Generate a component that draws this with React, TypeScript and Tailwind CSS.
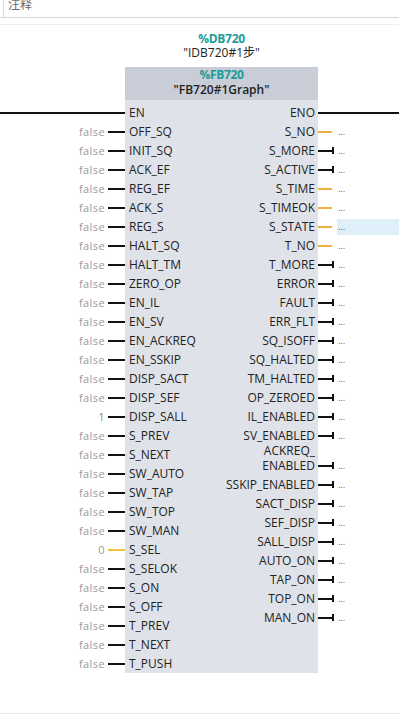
import React from "react";

type L = { v: string; n: string; kind?: "en" | "yellow" };
const left: L[] = [
  { v: "", n: "EN", kind: "en" },
  { v: "false", n: "OFF_SQ" },
  { v: "false", n: "INIT_SQ" },
  { v: "false", n: "ACK_EF" },
  { v: "false", n: "REG_EF" },
  { v: "false", n: "ACK_S" },
  { v: "false", n: "REG_S" },
  { v: "false", n: "HALT_SQ" },
  { v: "false", n: "HALT_TM" },
  { v: "false", n: "ZERO_OP" },
  { v: "false", n: "EN_IL" },
  { v: "false", n: "EN_SV" },
  { v: "false", n: "EN_ACKREQ" },
  { v: "false", n: "EN_SSKIP" },
  { v: "false", n: "DISP_SACT" },
  { v: "false", n: "DISP_SEF" },
  { v: "1", n: "DISP_SALL" },
  { v: "false", n: "S_PREV" },
  { v: "false", n: "S_NEXT" },
  { v: "false", n: "SW_AUTO" },
  { v: "false", n: "SW_TAP" },
  { v: "false", n: "SW_TOP" },
  { v: "false", n: "SW_MAN" },
  { v: "0", n: "S_SEL", kind: "yellow" },
  { v: "false", n: "S_SELOK" },
  { v: "false", n: "S_ON" },
  { v: "false", n: "S_OFF" },
  { v: "false", n: "T_PREV" },
  { v: "false", n: "T_NEXT" },
  { v: "false", n: "T_PUSH" },
];

type R = { n: string; k: "eno" | "o" | "b"; hl?: boolean; two?: boolean };
const right: R[] = [
  { n: "ENO", k: "eno" },
  { n: "S_NO", k: "o" },
  { n: "S_MORE", k: "b" },
  { n: "S_ACTIVE", k: "b" },
  { n: "S_TIME", k: "o" },
  { n: "S_TIMEOK", k: "o" },
  { n: "S_STATE", k: "o", hl: true },
  { n: "T_NO", k: "o" },
  { n: "T_MORE", k: "b" },
  { n: "ERROR", k: "b" },
  { n: "FAULT", k: "b" },
  { n: "ERR_FLT", k: "b" },
  { n: "SQ_ISOFF", k: "b" },
  { n: "SQ_HALTED", k: "b" },
  { n: "TM_HALTED", k: "b" },
  { n: "OP_ZEROED", k: "b" },
  { n: "IL_ENABLED", k: "b" },
  { n: "SV_ENABLED", k: "b" },
  { n: "ACKREQ_ENABLED", k: "b", two: true },
  { n: "SSKIP_ENABLED", k: "b" },
  { n: "SACT_DISP", k: "b" },
  { n: "SEF_DISP", k: "b" },
  { n: "SALL_DISP", k: "b" },
  { n: "AUTO_ON", k: "b" },
  { n: "TAP_ON", k: "b" },
  { n: "TOP_ON", k: "b" },
  { n: "MAN_ON", k: "b" },
];

const font = { fontFamily: '"Open Sans", "Noto Sans CJK SC", sans-serif' };

export default function App() {
  return (
    <div
      className="w-[399px] h-[721px] bg-white overflow-hidden relative text-[12px] text-[#222]"
      style={font}
    >
      {/* top bar */}
      <div className="h-[18px] border-b border-[#d6d6d6] flex items-start">
        <div className="ml-[3px] w-px h-[17px] bg-[#dcdcdc]" />
        <span className="ml-[4px] -mt-[3px] text-[12px] leading-[16px] text-[#6a6a6a]">注释</span>
      </div>
      <div className="h-[7px] border-b border-[#eeeeee]" />

      <div className="grid grid-cols-[125px_193px_81px]">
        {/* titles row */}
        <div />
        <div className="flex flex-col items-center pt-[7px]">
          <div className="leading-[14px] font-bold text-[#1b9c9a] tracking-[-0.3px]">%DB720</div>
          <div className="leading-[14px] text-[#222]">"IDB720#1步"</div>
          <div className="mt-[7px] w-full h-[33px] bg-[#c9cdd7] flex flex-col items-center">
            <div className="leading-[15px] font-bold text-[#1b9c9a] tracking-[-0.3px]">%FB720</div>
            <div className="leading-[15px] text-[#222] font-semibold">"FB720#1Graph"</div>
          </div>
        </div>
        <div />

        {/* left outer */}
        <div className="flex flex-col pt-[3px]">
          {left.map((r) => (
            <div key={r.n} className="h-[19px] flex items-center justify-end">
              {r.kind === "en" ? (
                <div className="w-full h-[2px] bg-[#111]" />
              ) : (
                <>
                  <span
                    className={
                      "text-[11px] leading-[19px] tracking-[0.4px] " +
                      (r.v === "1" ? "text-[#7f8ca6]" : "text-[#999999]")
                    }
                  >
                    {r.v}
                  </span>
                  <div
                    className={
                      "ml-[3px] w-[17px] h-[2px] " + (r.kind === "yellow" ? "bg-[#f2c23a]" : "bg-[#111]")
                    }
                  />
                </>
              )}
            </div>
          ))}
        </div>

        {/* block body */}
        <div className="bg-[#e0e2e9] flex flex-row justify-between pt-[3px]">
          <div className="flex flex-col pl-[4px]">
            {left.map((r) => (
              <div key={r.n} className="h-[19px] leading-[19px] whitespace-nowrap">
                {r.n}
              </div>
            ))}
          </div>
          <div className="flex flex-col items-end pr-[3px]">
            {right.map((r) =>
              r.two ? (
                <div key={r.n} className="h-[30px] flex flex-col justify-end items-end leading-[15px] pb-[2px]">
                  <div>ACKREQ_</div>
                  <div>ENABLED</div>
                </div>
              ) : (
                <div key={r.n} className="h-[19px] leading-[19px] whitespace-nowrap">
                  {r.n}
                </div>
              )
            )}
          </div>
        </div>

        {/* right outer */}
        <div className="flex flex-col pt-[3px]">
          {right.map((r) => (
            <div
              key={r.n}
              className={(r.two ? "h-[30px] items-end" : "h-[19px] items-center") + " flex"}
            >
              {r.k === "eno" ? (
                <div className="w-full h-[2px] bg-[#111]" />
              ) : (
                <div className={(r.two ? "h-[19px] " : "") + "flex items-center w-full"}>
                  <div className={"w-[14px] h-[2px] " + (r.k === "o" ? "bg-[#f0b040]" : "bg-[#111]")} />
                  {r.k === "b" ? <div className="w-[2px] h-[7px] bg-[#111]" /> : <div className="w-[2px]" />}
                  <div
                    className={
                      "ml-[3px] flex-1 h-[16px] flex items-center text-[9px] text-[#555] pl-[1px] " +
                      (r.hl ? "bg-[#dff0fa]" : "")
                    }
                  >
                    ...
                  </div>
                </div>
              )}
            </div>
          ))}
        </div>
      </div>

      <div className="mt-[40px] h-px bg-[#e6e6e6]" />
    </div>
  );
}
